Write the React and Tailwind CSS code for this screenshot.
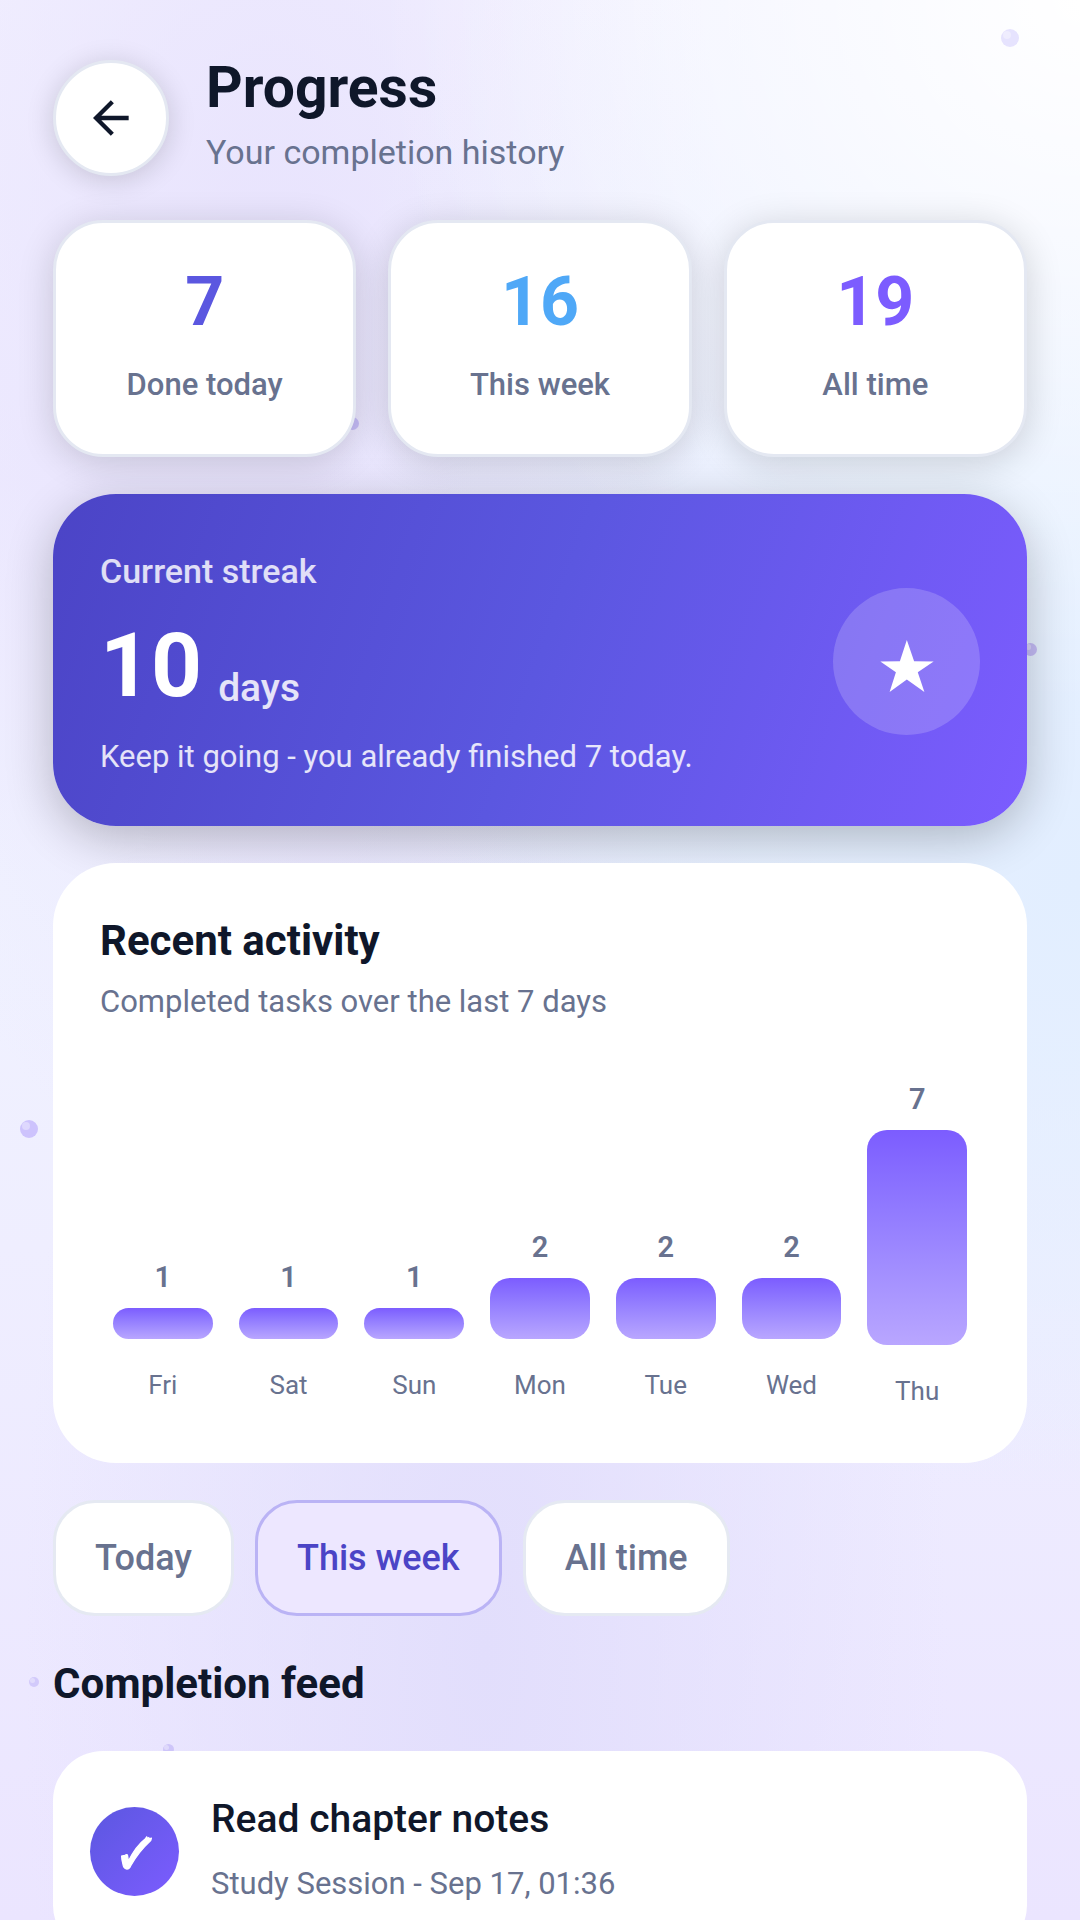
import React, { useState } from "react";

const STATS = [
  { value: 7, label: "Done today", color: "text-[#5b57e0]" },
  { value: 16, label: "This week", color: "text-[#4fa8f7]" },
  { value: 19, label: "All time", color: "text-[#7c5cff]" },
];

const ACTIVITY = [
  { day: "Fri", count: 1, height: 31 },
  { day: "Sat", count: 1, height: 31 },
  { day: "Sun", count: 1, height: 31 },
  { day: "Mon", count: 2, height: 61 },
  { day: "Tue", count: 2, height: 61 },
  { day: "Wed", count: 2, height: 61 },
  { day: "Thu", count: 7, height: 215 },
];

const FILTERS = ["Today", "This week", "All time"];

const FEED = [
  { title: "Read chapter notes", meta: "Study Session - Sep 17, 01:36" },
];

const BackIcon = () => (
  <svg viewBox="0 0 108 108" className="size-9" fill="none" stroke="currentColor" strokeWidth="13">
    <path d="M107 54H10M58 5L9 54L58 103" />
  </svg>
);

const StarIcon = () => (
  <svg viewBox="0 0 161 157" className="w-[54px] h-[52px]" fill="currentColor">
    <path d="M80 0L102 64L161 65L113 97L133 157L80 119L28 157L47 97L0 65L59 64Z" />
  </svg>
);

const CheckIcon = () => (
  <svg viewBox="-2 -2 94 101" className="w-[31px] h-[34px]" fill="currentColor" stroke="currentColor" strokeWidth="4">
    <path d="M0 58C4 55 8 58 11 55C15 52 18 53 18 57C19 63 19 68 21 72C34 46 50 22 72 5L76 0L78 4L82 2L83 5L90 4L88 11C64 33 44 58 27 88C24 96 20 97 16 97C9 96 7 93 5 87C2 76 0 68 0 58Z" />
  </svg>
);

// Floating decoration behind the content
const Bubble = ({ className }) => (
  <span className={`absolute rounded-full ${className}`}>
    <span className="absolute left-[12%] top-[10%] size-[45%] rounded-full bg-white/35" />
  </span>
);

const StatCard = ({ value, label, color }) => (
  <div className="flex-1 flex flex-col items-center pt-[39px] pb-[46px] bg-white border-3 border-[#e4e8f2] rounded-[50px] shadow-[0_6px_36px_rgba(0,0,0,0.16)]">
    <span className={`text-[68px] leading-[80px] font-bold ${color}`}>{value}</span>
    <span className="mt-5 text-[31px] leading-[46px] font-medium text-[#68728f]">{label}</span>
  </div>
);

const App = () => {
  const [filter, setFilter] = useState("This week");

  return (
    <div className="relative h-screen overflow-hidden font-['Roboto',sans-serif] text-[#0f172a] bg-[#efedff]">
      <div className="absolute inset-0 bg-[radial-gradient(circle_at_100%_0%,#ffffff_0%,#ffffff00_32%),radial-gradient(ellipse_at_100%_46%,#e2eeff_0%,#e2eeff00_42%),radial-gradient(ellipse_at_90%_30%,#e7f2ff_0%,#e7f2ff00_48%),radial-gradient(ellipse_at_45%_86%,#e2defc_0%,#e2defc00_55%),radial-gradient(ellipse_at_25%_16%,#e8e3fd_0%,#e8e3fd00_40%),linear-gradient(180deg,#f3f1ff_0%,#eeebff_25%,#f0f2ff_46%,#efeeff_65%,#ebe5ff_100%)]" />
      <Bubble className="left-[1001px] top-[29px] size-[18px] bg-[#e6e3fe]" />
      <Bubble className="left-[346px] top-[417px] size-[13px] bg-[#c4bbf6]" />
      <Bubble className="left-[1024px] top-[643px] size-[13px] bg-[#c4bbf6]" />
      <Bubble className="left-[20px] top-[1120px] size-[18px] bg-[#cdc3fd]" />
      <Bubble className="left-[29px] top-[1677px] size-[10px] bg-[#d2cafb]" />
      <Bubble className="left-[163px] top-[1744px] size-[11px] bg-[#cec5f9]" />

      <main className="relative h-full overflow-y-auto [scrollbar-width:none] px-[53px] pt-[60px] pb-12">
        <header className="flex items-center gap-[37px]">
          <button
            aria-label="Back"
            className="size-[116px] flex items-center justify-center rounded-full bg-white border-3 border-[#e4e8f2] shadow-[0_4px_28px_rgba(0,0,0,0.16)]"
          >
            <BackIcon />
          </button>
          <div>
            <h1 className="text-[57px] leading-[52px] font-bold">Progress</h1>
            <p className="mt-4 text-[34px] leading-[44px] text-[#68728f]">Your completion history</p>
          </div>
        </header>

        <section className="mt-11 flex gap-8">
          {STATS.map((s) => <StatCard key={s.label} {...s} />)}
        </section>

        <section className="mt-[37px] px-[47px] pt-12 pb-[46px] flex items-center justify-between rounded-[63px] text-white bg-[linear-gradient(109deg,#4b44c6_0%,#5b57e0_50%,#7c5cff_100%)] shadow-[0_12px_48px_rgba(0,0,0,0.24)]">
          <div>
            <p className="text-[34px] leading-[58px] font-medium text-white/82">Current streak</p>
            <div className="mt-[14px] flex items-end gap-4">
              <span className="text-[89px] leading-[104px] font-bold">10</span>
              <span className="text-[39px] leading-[60px] font-medium text-white/85">days</span>
            </div>
            <p className="mt-4 text-[31px] leading-[46px] text-white/85">
              Keep it going - you already finished 7 today.
            </p>
          </div>
          <div className="size-[147px] pt-[10px] shrink-0 flex items-center justify-center rounded-full bg-white/18">
            <StarIcon />
          </div>
        </section>

        <section className="mt-[37px] px-[47px] pt-12 pb-[57px] bg-white rounded-[63px]">
          <h2 className="text-[42px] leading-[60px] font-bold">Recent activity</h2>
          <p className="mt-2 text-[31px] leading-[46px] text-[#68728f]">
            Completed tasks over the last 7 days
          </p>
          <div className="mt-[57px] flex items-start">
            {ACTIVITY.map(({ day, count, height }) => (
              <div key={day} className="flex-1 min-h-[318px] px-[13px] flex flex-col justify-end text-center text-[#68728f]">
                <span className="text-[29px] leading-[34px] font-semibold">{count}</span>
                <div
                  className="mt-[14px] rounded-[20px] bg-linear-to-b from-[#7c5cff] to-[#b9a6ff]"
                  style={{ height }}
                />
                <span className="mt-[31px] text-[26px] leading-[30px]">{day}</span>
              </div>
            ))}
          </div>
        </section>

        <div className="mt-[37px] flex gap-[21px]">
          {FILTERS.map((name) => (
            <button
              key={name}
              onClick={() => setFilter(name)}
              className={`h-[116px] px-[39px] rounded-[42px] border-3 text-[36px] font-medium ${
                filter === name
                  ? "bg-[#ede7ff] border-[#bab3f5] text-[#4b44c6]"
                  : "bg-white border-[#e5e9f2] text-[#68728f]"
              }`}
            >
              {name}
            </button>
          ))}
        </div>

        <h2 className="mt-[39px] text-[42px] leading-[58px] font-bold">Completion feed</h2>

        <ul className="mt-[38px]">
          {FEED.map(({ title, meta }) => (
            <li key={title} className="px-[37px] pt-11 pb-12 flex items-center gap-8 bg-white rounded-[50px]">
              <div className="size-[89px] pl-[3px] pt-[3px] shrink-0 flex items-center justify-center rounded-full text-white bg-linear-to-br from-[#5b57e0] to-[#7c5cff]">
                <CheckIcon />
              </div>
              <div>
                <h3 className="text-[39px] leading-[48px] font-medium">{title}</h3>
                <p className="mt-[18px] text-[31px] leading-[46px] text-[#68728f]">{meta}</p>
              </div>
            </li>
          ))}
        </ul>
      </main>
    </div>
  );
};

export default App;
